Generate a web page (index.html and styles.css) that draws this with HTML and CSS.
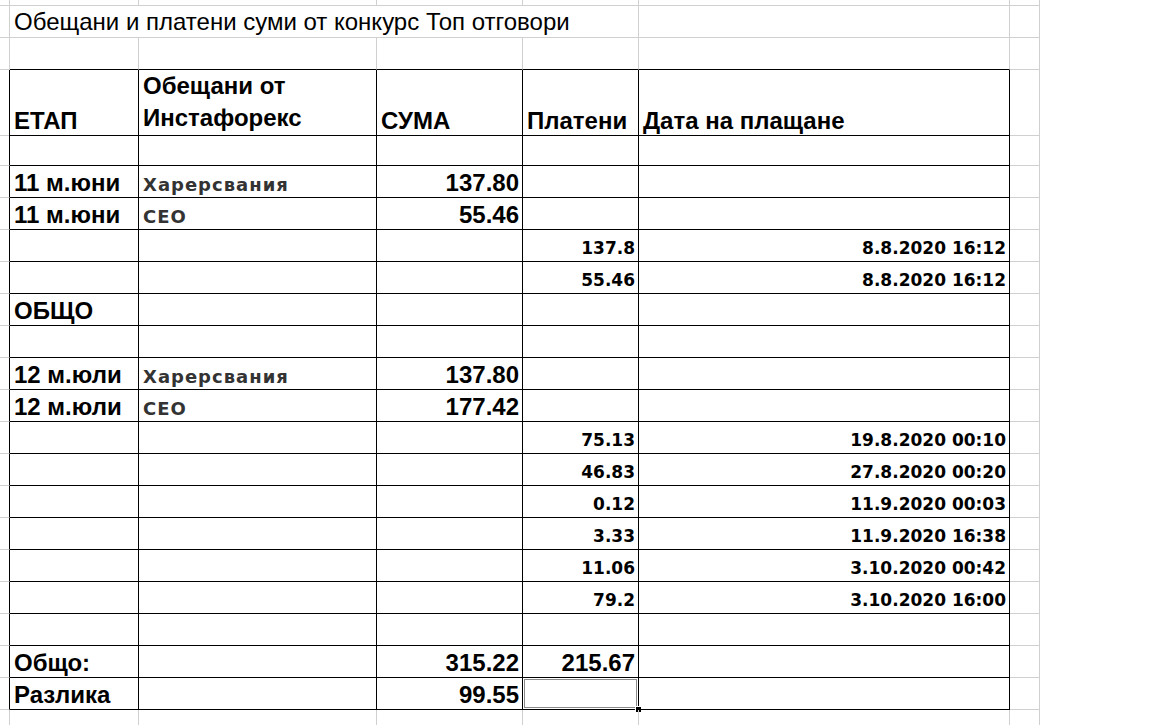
FILE: index.html
```html
<!DOCTYPE html>
<html lang="bg">
<head>
<meta charset="utf-8">
<title>Обещани и платени суми</title>
<link rel="stylesheet" href="styles.css">
</head>
<body>
<div class="sheet">
  <div class="row r-top">
    <div class="c"></div><div class="c"></div><div class="c"></div><div class="c"></div><div class="c"></div><div class="c"></div><div class="c"></div>
  </div>
  <div class="row">
    <div class="c"></div>
    <div class="c title span4">Обещани и платени суми от конкурс Топ отговори</div>
    <div class="c"></div><div class="c"></div>
  </div>
  <div class="row">
    <div class="c"></div>
    <div class="c tb"></div><div class="c tb"></div><div class="c tb"></div><div class="c tb"></div><div class="c tb"></div>
    <div class="c"></div>
  </div>
  <div class="row r-head">
    <div class="c edge"></div>
    <div class="c t a">ЕТАП</div>
    <div class="c t a wrap">Обещани от<br>Инстафорекс</div>
    <div class="c t a">СУМА</div>
    <div class="c t a">Платени</div>
    <div class="c t a">Дата на плащане</div>
    <div class="c"></div>
  </div>
  <div class="row">
    <div class="c edge"></div><div class="c t"></div><div class="c t"></div><div class="c t"></div><div class="c t"></div><div class="c t"></div><div class="c"></div>
  </div>
  <div class="row">
    <div class="c edge"></div>
    <div class="c t a">11 м.юни</div>
    <div class="c t v">Харерсвания</div>
    <div class="c t a num">137.80</div>
    <div class="c t"></div><div class="c t"></div><div class="c"></div>
  </div>
  <div class="row">
    <div class="c edge"></div>
    <div class="c t a">11 м.юни</div>
    <div class="c t v">СЕО</div>
    <div class="c t a num">55.46</div>
    <div class="c t"></div><div class="c t"></div><div class="c"></div>
  </div>
  <div class="row">
    <div class="c edge"></div><div class="c t"></div><div class="c t"></div><div class="c t"></div>
    <div class="c t p num">137.8</div>
    <div class="c t p num">8.8.2020 16:12</div>
    <div class="c"></div>
  </div>
  <div class="row">
    <div class="c edge"></div><div class="c t"></div><div class="c t"></div><div class="c t"></div>
    <div class="c t p num">55.46</div>
    <div class="c t p num">8.8.2020 16:12</div>
    <div class="c"></div>
  </div>
  <div class="row">
    <div class="c edge"></div>
    <div class="c t a">ОБЩО</div>
    <div class="c t"></div><div class="c t"></div><div class="c t"></div><div class="c t"></div><div class="c"></div>
  </div>
  <div class="row">
    <div class="c edge"></div><div class="c t"></div><div class="c t"></div><div class="c t"></div><div class="c t"></div><div class="c t"></div><div class="c"></div>
  </div>
  <div class="row">
    <div class="c edge"></div>
    <div class="c t a">12 м.юли</div>
    <div class="c t v">Харерсвания</div>
    <div class="c t a num">137.80</div>
    <div class="c t"></div><div class="c t"></div><div class="c"></div>
  </div>
  <div class="row">
    <div class="c edge"></div>
    <div class="c t a">12 м.юли</div>
    <div class="c t v">СЕО</div>
    <div class="c t a num">177.42</div>
    <div class="c t"></div><div class="c t"></div><div class="c"></div>
  </div>
  <div class="row">
    <div class="c edge"></div><div class="c t"></div><div class="c t"></div><div class="c t"></div>
    <div class="c t p num">75.13</div>
    <div class="c t p num">19.8.2020 00:10</div>
    <div class="c"></div>
  </div>
  <div class="row">
    <div class="c edge"></div><div class="c t"></div><div class="c t"></div><div class="c t"></div>
    <div class="c t p num">46.83</div>
    <div class="c t p num">27.8.2020 00:20</div>
    <div class="c"></div>
  </div>
  <div class="row">
    <div class="c edge"></div><div class="c t"></div><div class="c t"></div><div class="c t"></div>
    <div class="c t p num">0.12</div>
    <div class="c t p num">11.9.2020 00:03</div>
    <div class="c"></div>
  </div>
  <div class="row">
    <div class="c edge"></div><div class="c t"></div><div class="c t"></div><div class="c t"></div>
    <div class="c t p num">3.33</div>
    <div class="c t p num">11.9.2020 16:38</div>
    <div class="c"></div>
  </div>
  <div class="row">
    <div class="c edge"></div><div class="c t"></div><div class="c t"></div><div class="c t"></div>
    <div class="c t p num">11.06</div>
    <div class="c t p num">3.10.2020 00:42</div>
    <div class="c"></div>
  </div>
  <div class="row">
    <div class="c edge"></div><div class="c t"></div><div class="c t"></div><div class="c t"></div>
    <div class="c t p num">79.2</div>
    <div class="c t p num">3.10.2020 16:00</div>
    <div class="c"></div>
  </div>
  <div class="row">
    <div class="c edge"></div><div class="c t"></div><div class="c t"></div><div class="c t"></div><div class="c t"></div><div class="c t"></div><div class="c"></div>
  </div>
  <div class="row">
    <div class="c edge"></div>
    <div class="c t a">Общо:</div>
    <div class="c t"></div>
    <div class="c t a num">315.22</div>
    <div class="c t a num">215.67</div>
    <div class="c t"></div><div class="c"></div>
  </div>
  <div class="row">
    <div class="c edge"></div>
    <div class="c t a">Разлика</div>
    <div class="c t"></div>
    <div class="c t a num">99.55</div>
    <div class="c t selected"><span class="selbox"></span><span class="handle"></span></div>
    <div class="c t"></div><div class="c"></div>
  </div>
  <div class="row r-bottom">
    <div class="c"></div><div class="c"></div><div class="c"></div><div class="c"></div><div class="c"></div><div class="c"></div><div class="c"></div>
  </div>
</div>
</body>
</html>
```

FILE: styles.css
```css
html, body {
  margin: 0;
  padding: 0;
  background: #ffffff;
}

.sheet {
  width: 1152px;
  height: 725px;
  overflow: hidden;
  color: #000;
  font-family: "Liberation Sans", Arial, sans-serif;
}

.row {
  display: grid;
  grid-template-columns: 10px 129px 238px 146px 116px 371px 30px;
  height: 32px;
}

.r-top { height: 6px; }
.r-head { height: 64px; }
.r-bottom { height: 16px; }
.r-bottom .c { border-bottom: none; }

.c {
  box-sizing: border-box;
  border-right: 1px solid #d0d0d0;
  border-bottom: 1px solid #d0d0d0;
  display: flex;
  align-items: flex-end;
  padding: 0 4px 1px 4px;
  white-space: nowrap;
  position: relative;
  min-width: 0;
}

.span4 {
  grid-column: span 4;
}

.title {
  font-size: 24px;
  line-height: 26px;
  padding-left: 4px;
  padding-bottom: 2px;
}

.tb { border-bottom-color: #000; }
.edge { border-right-color: #000; }
.t {
  border-right-color: #000;
  border-bottom-color: #000;
}

.a {
  font-weight: bold;
  font-size: 24px;
  line-height: 26px;
  padding-bottom: 1px;
}

.wrap {
  white-space: normal;
  line-height: 32px;
  padding-bottom: 1px;
}

.v {
  font-family: "DejaVu Sans", Verdana, sans-serif;
  font-weight: bold;
  font-size: 18px;
  letter-spacing: 1px;
  color: #333333;
  line-height: 20px;
  padding-bottom: 2px;
}

.p {
  font-family: "DejaVu Sans", Tahoma, sans-serif;
  font-weight: bold;
  font-size: 17px;
  line-height: 20px;
  color: #000;
  padding-bottom: 3px;
}

.num {
  justify-content: flex-end;
  padding-right: 3px;
}

.selbox {
  position: absolute;
  left: -1px;
  top: -1px;
  right: -1px;
  bottom: -1px;
  border: 1px solid #000;
  box-shadow: inset 0 0 0 1px #ffffff, inset 0 0 0 2px #8a8a8a;
}

.handle {
  position: absolute;
  right: -4px;
  bottom: -4px;
  box-sizing: border-box;
  width: 7px;
  height: 7px;
  background: #000;
  border: 1px solid #fff;
}
```
